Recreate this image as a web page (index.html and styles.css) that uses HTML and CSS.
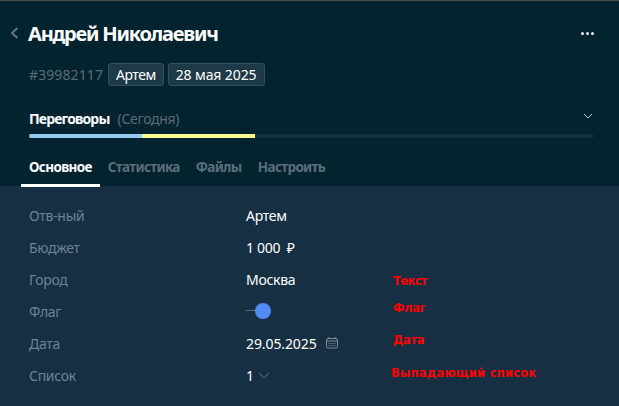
FILE: index.html
```html
<!DOCTYPE html>
<html lang="ru">

<head>
    <meta charset="UTF-8">
    <title>Андрей Николаевич</title>
    <link rel="stylesheet" href="styles.css">
</head>

<body>
    <div class="card">
        <div class="head">
            <div class="title-row">
                <svg class="back" width="9" height="12" viewBox="0 0 9 12"><path d="M7.5 1 L2 6 L7.5 11" fill="none" stroke="#65757f" stroke-width="2"/></svg>
                <h1 class="title">Андрей Николаевич</h1>
                <div class="dots"><i></i><i></i><i></i></div>
            </div>
            <div class="meta">
                <span class="num">#39982117</span>
                <span class="tag">Артем</span>
                <span class="tag wide">28 мая 2025</span>
            </div>
            <div class="stage">
                <b>Переговоры</b>
                <span class="today">(Сегодня)</span>
                <svg class="stage-arrow" width="10" height="7" viewBox="0 0 10 7"><path d="M1 1 L5 5 L9 1" fill="none" stroke="#c5ced4" stroke-width="1"/></svg>
            </div>
            <div class="progress">
                <div class="part blue"></div>
                <div class="part yellow"></div>
            </div>
            <ul class="tabs">
                <li class="active">Основное</li>
                <li>Статистика</li>
                <li>Файлы</li>
                <li>Настроить</li>
            </ul>
        </div>
        <div class="fields">
            <div class="row"><span class="label">Отв-ный</span><span class="value">Артем</span></div>
            <div class="row"><span class="label">Бюджет</span><span class="value">1 000 &nbsp;₽</span></div>
            <div class="row"><span class="label">Город</span><span class="value">Москва</span></div>
            <div class="row"><span class="label">Флаг</span><span class="value"><span class="switch"><i></i></span></span></div>
            <div class="row">
                <span class="label">Дата</span>
                <span class="value date">29.05.2025<svg class="cal" width="12" height="12" viewBox="0 0 12 12" fill="none" stroke="#7c8b98"><rect x="0.5" y="1.5" width="11" height="9.5" rx="1.5"/><path d="M3 0 V2 M9 0 V2 M1 4 H11"/><path d="M2.5 6.5 H9.5 M2.5 8.5 H9.5" stroke-dasharray="1 1"/></svg></span>
            </div>
            <div class="row">
                <span class="label">Список</span>
                <span class="value">1<svg class="select-arrow" width="12" height="7" viewBox="0 0 12 7"><path d="M1 1 L6 6 L11 1" fill="none" stroke="#5d7284" stroke-width="1"/></svg></span>
            </div>
            <span class="note n1">Текст</span>
            <span class="note n2">Флаг</span>
            <span class="note n3">Дата</span>
            <span class="note n4">Выпадающий список</span>
        </div>
    </div>
</body>

</html>
```
FILE: styles.css
```css
* {
    margin: 0;
    padding: 0;
    list-style: none;
    box-sizing: border-box;
}

body {
    width: 619px;
    height: 406px;
    overflow: hidden;
    background: #162f43;
    font-family: "Noto Sans", "Liberation Sans", sans-serif;
    font-size: 14px;
}

.card {
    display: flex;
    flex-direction: column;
    height: 406px;
}

.head {
    height: 186px;
    padding: 0 25px 0 29px;
    background: #03232f;
    border-top: 1px solid #4a4a44;
}

.title-row {
    display: flex;
    align-items: center;
    height: 44px;
    margin-top: 10px;
    margin-left: -19px;
}

.back {
    margin-right: 9px;
}

.title {
    font-size: 20px;
    font-weight: 700;
    color: #fff;
    letter-spacing: -1.2px;
}

.dots {
    display: flex;
    gap: 2px;
    margin-left: auto;
}

.dots i {
    width: 3px;
    height: 3px;
    border-radius: 50%;
    background: #e8edf0;
}

.meta {
    display: flex;
    align-items: center;
    gap: 5px;
    margin-top: 8px;
}

.num {
    color: #5b6c77;
    font-size: 14px;
    letter-spacing: 0.1px;
}

.tag {
    display: block;
    height: 23px;
    line-height: 21px;
    padding: 0 7px;
    color: #fff;
    background: #1e3a48;
    border: 1px solid #33505e;
    border-radius: 3px;
    letter-spacing: -0.5px;
}

.wide {
    margin-left: -1px;
    letter-spacing: -0.1px;
}

.stage {
    display: flex;
    align-items: center;
    height: 20px;
    margin-top: 22px;
    color: #fff;
    font-size: 14px;
}

.stage b {
    letter-spacing: -0.85px;
}

.today {
    margin-left: 8px;
    color: #5b6c77;
    letter-spacing: -0.3px;
}

.stage-arrow {
    margin-left: auto;
    margin-right: 1px;
    margin-top: -4px;
}

.progress {
    display: flex;
    height: 4px;
    margin-top: 6px;
    background: #142e3a;
    border-radius: 2px;
    overflow: hidden;
}

.part {
    width: 113px;
}

.blue {
    background: #99c9f5;
}

.yellow {
    background: #fbf88c;
}

.tabs {
    display: flex;
    gap: 16px;
    margin-top: 14px;
}

.tabs li {
    height: 35px;
    line-height: 30px;
    color: #5b6f7b;
    font-weight: 700;
    font-size: 13.5px;
    letter-spacing: -0.65px;
    position: relative;
}

.tabs .active {
    color: #fff;
}

.tabs .active::after {
    content: "";
    position: absolute;
    left: -8px;
    right: -8px;
    bottom: 0;
    height: 3px;
    background: #fff;
}

.fields {
    flex: 1;
    padding: 13px 29px 0;
    position: relative;
}

.row {
    display: flex;
    align-items: center;
    height: 32px;
}

.label {
    width: 217px;
    color: #6c8398;
    letter-spacing: -0.3px;
}

.value {
    display: flex;
    align-items: center;
    color: #fff;
    letter-spacing: -0.3px;
}

.date {
    letter-spacing: -0.1px;
}

.switch {
    display: block;
    width: 25px;
    height: 16px;
    position: relative;
}

.switch::before {
    content: "";
    position: absolute;
    left: 0;
    top: 7px;
    width: 10px;
    height: 1px;
    background: #5d7284;
}

.switch i {
    position: absolute;
    right: 0;
    top: 0;
    width: 16px;
    height: 16px;
    border-radius: 50%;
    background: #4f8bf1;
}

.cal {
    margin-left: 9px;
}

.select-arrow {
    margin-left: 4px;
}

.note {
    position: absolute;
    color: #f00;
    font-family: "DejaVu Sans", sans-serif;
    font-size: 11.5px;
    font-weight: 700;
    line-height: 14px;
}

.n1 {
    left: 393px;
    top: 88px;
    letter-spacing: -0.6px;
}

.n2 {
    left: 393px;
    top: 115px;
    letter-spacing: -0.3px;
}

.n3 {
    left: 393px;
    top: 147px;
    letter-spacing: -0.3px;
}

.n4 {
    left: 391px;
    top: 180px;
    letter-spacing: 0.25px;
}
```
